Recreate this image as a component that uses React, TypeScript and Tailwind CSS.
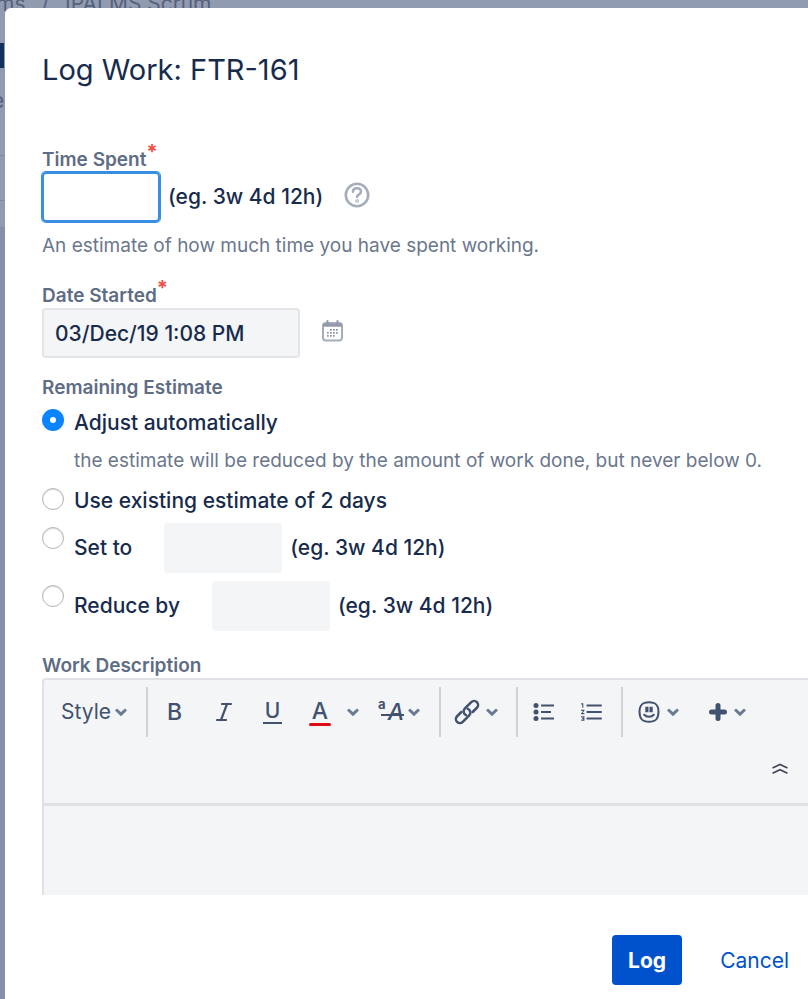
import type { ReactNode } from 'react'
import { Italic } from 'lucide-react'
import { MdFormatListNumbered } from 'react-icons/md'

const HINT = '(eg. 3w 4d 12h)'

function Chevron() {
  return (
    <svg width="12" height="12" viewBox="0 0 12 12" fill="none" stroke="#6b7a93" strokeWidth="3" aria-hidden="true">
      <path d="M1 3.5 6 8.2l5-4.7" />
    </svg>
  )
}

function HelpIcon() {
  return (
    <svg width="26" height="26" viewBox="0 0 26 26" fill="none" stroke="#a5adba" strokeWidth="2.6" strokeLinecap="round" aria-hidden="true">
      <circle cx="13" cy="13" r="11.2" />
      <path d="M9 9.800C9 7.500 10.700 6.200 13 6.200s4 1.400 4 3.500c0 2.700-3.900 2.700-3.900 5.300" />
      <circle cx="13.100" cy="19" r="0.500" />
    </svg>
  )
}

function CalendarIcon() {
  const dots = [
    [9, 9], [12, 9], [15, 9],
    [6, 12], [9, 12], [12, 12], [15, 12],
    [6, 15], [9, 15], [12, 15],
  ]
  return (
    <svg width="21" height="22" viewBox="0 0 21 22" fill="none" aria-hidden="true">
      <rect x="1" y="3" width="19" height="17.500" rx="3" stroke="#a5adba" strokeWidth="2" />
      <path d="M1 5.200h19" stroke="#9099aa" strokeWidth="3" />
      <path d="M5.500 1v3M15.500 1v3" stroke="#9099aa" strokeWidth="2" strokeLinecap="round" />
      {dots.map(([x, y]) => (
        <rect key={`${x}-${y}`} x={x - 1} y={y} width="1.700" height="1.700" fill="#8993a4" />
      ))}
    </svg>
  )
}

function LinkIcon() {
  return (
    <svg width="26" height="26" viewBox="-13 -13 26 26" fill="none" stroke="#42526e" strokeWidth="2.500" strokeLinecap="round" aria-hidden="true">
      <g transform="rotate(-45)">
        <path d="M4 4H10a4 4 0 0 0 0-8H.8a4 4 0 0 0-3.600 5.600" />
        <path d="M-4-4H-10a4 4 0 0 0 0 8H-.8a4 4 0 0 0 3.600-5.600" />
      </g>
    </svg>
  )
}

function BulletsIcon() {
  return (
    <svg width="22" height="20" viewBox="0 0 22 20" aria-hidden="true">
      <g fill="#42526e">
        <circle cx="3" cy="3.500" r="2.500" />
        <circle cx="3" cy="10" r="2.500" />
        <circle cx="3" cy="16.500" r="2.500" />
      </g>
      <path d="M8 3.500h13M8 10h10M8 16.500h13" stroke="#42526e" strokeWidth="2" />
    </svg>
  )
}

function EmojiIcon() {
  return (
    <svg width="22" height="22" viewBox="0 0 22 22" fill="none" stroke="#42526e" strokeWidth="2" aria-hidden="true">
      <path d="M11 1.200c6.900 0 9.500 2.800 9.500 9.600s-2.600 10-9.500 10-9.500-3.200-9.500-10S4.100 1.200 11 1.200Z" />
      <path d="M8.900 5.800v5.400M13.100 5.800v5.400" strokeWidth="3.200" />
      <path d="M6.200 13.800c2.400 2.600 7.200 2.600 9.600 0" strokeLinecap="round" />
    </svg>
  )
}

function PlusIcon() {
  return (
    <svg width="18" height="18" viewBox="0 0 18 18" stroke="#42526e" strokeWidth="5" strokeLinecap="round" aria-hidden="true">
      <path d="M9 2.500v13M2.500 9h13" />
    </svg>
  )
}

function CollapseIcon() {
  return (
    <svg width="16" height="12" viewBox="0 0 16 12" fill="none" stroke="#42475a" strokeWidth="1.600" aria-hidden="true">
      <path d="M.5 5 8 1.500 15.500 5M.5 10.200 8 6.700l7.500 3.500" />
    </svg>
  )
}

function Required() {
  return <span className="absolute -top-1.5 left-full text-[20px] font-bold text-[#f0504a]">*</span>
}

function FieldLabel({ htmlFor, required, children }: { htmlFor: string; required?: boolean; children: ReactNode }) {
  return (
    <label htmlFor={htmlFor} className="relative block w-fit pt-0.5 text-[19px] leading-6 font-semibold text-[#5e6c84]">
      {children}
      {required && <Required />}
    </label>
  )
}

function Radio({ id, checked }: { id: string; checked?: boolean }) {
  return (
    <input
      type="radio"
      id={id}
      name="estimate"
      defaultChecked={checked}
      className="mt-1 size-[22px] shrink-0 appearance-none rounded-full border border-[#b4b4b4] bg-white shadow-[inset_0_1px_1px_#d8d8d8] checked:border-8 checked:border-[#0a84ff] checked:shadow-none"
    />
  )
}

function ToolButton({ label, className, children }: { label: string; className: string; children: ReactNode }) {
  return (
    <button type="button" aria-label={label} className={`flex h-full items-center justify-center ${className}`}>
      {children}
    </button>
  )
}

function Toolbar() {
  return (
    <div className="flex h-[123px] flex-col justify-between text-[#42526e]">
      <div className="mt-[7px] flex h-[50px] divide-x-2 divide-[#cfd2d8]">
        <div className="relative flex w-[104px] items-center">
          <select aria-label="Style" className="h-full w-full appearance-none bg-transparent pl-[17px] text-[21px]">
            <option>Style</option>
          </select>
          <span className="pointer-events-none absolute right-[19px]">
            <Chevron />
          </span>
        </div>
        <div className="flex w-[293px] items-center pl-0.5">
          <ToolButton label="Bold" className="w-[49px] text-[23px] font-medium">B</ToolButton>
          <ToolButton label="Italic" className="w-[49px]">
            <Italic size={24} strokeWidth={2.2} />
          </ToolButton>
          <ToolButton label="Underline" className="w-[49px]">
            <span className="border-b-2 border-[#42526e] px-0.5 text-[21px] leading-[22px] font-medium">U</span>
          </ToolButton>
          <ToolButton label="Text color" className="w-[74px] gap-4">
            <span className="flex flex-col items-center text-[23px] leading-6 font-medium">
              A
              <span className="h-[3px] w-[22px] rounded-full bg-[#de0a16]" />
            </span>
            <Chevron />
          </ToolButton>
          <ToolButton label="More formatting" className="w-[56px] gap-1">
            <span className="relative flex w-[26px] items-center justify-end text-[23px] leading-6 font-medium italic">
              <span className="absolute -top-1 left-0 text-[13px] leading-4 font-bold not-italic">a</span>
              A
              <span className="absolute top-3.5 right-0 h-0.5 w-[23px] bg-[#42526e]" />
            </span>
            <Chevron />
          </ToolButton>
        </div>
        <div className="flex w-[77px] pr-1.5">
          <ToolButton label="Link" className="w-full gap-1.5">
            <LinkIcon />
            <Chevron />
          </ToolButton>
        </div>
        <div className="flex w-[105px] pl-0.5">
          <ToolButton label="Bullet list" className="w-[48px]">
            <BulletsIcon />
          </ToolButton>
          <ToolButton label="Numbered list" className="w-[48px]">
            <MdFormatListNumbered size={26} />
          </ToolButton>
        </div>
        <div className="flex">
          <ToolButton label="Emoji" className="w-[70px] gap-[7px]">
            <EmojiIcon />
            <Chevron />
          </ToolButton>
          <ToolButton label="Insert" className="w-[68px] gap-[7px]">
            <PlusIcon />
            <Chevron />
          </ToolButton>
        </div>
      </div>
      <button type="button" aria-label="Collapse toolbar" className="mr-5 mb-7 self-end">
        <CollapseIcon />
      </button>
    </div>
  )
}

function BoardBehind() {
  return (
    <div aria-hidden="true" className="absolute inset-0 overflow-hidden bg-[#8590a8] text-[21px] text-[#55617b]">
      <div className="h-[235px] bg-[#919bb0]">
        <div className="-mt-2 -ml-1 flex gap-4 leading-6">
          <span>ms</span>
          <span>/</span>
          <span>IPALMS Scrum</span>
        </div>
        <div className="mt-[27px] h-[25px] w-1 bg-[#12305c]" />
        <div className="-ml-2 mt-[21px] leading-6">e</div>
        <div className="mt-[42px] h-[46px] border-y border-[#7f8aa1]" />
      </div>
    </div>
  )
}

export default function App() {
  return (
    <div className="relative min-h-screen pt-2 pl-[5px] font-['Inter',sans-serif]">
      <BoardBehind />
      <div role="dialog" aria-labelledby="title" className="relative min-h-[calc(100vh-8px)] rounded-tl-md bg-white pt-[42px] pl-[37px] text-[#172b4d]">
        <h1 id="title" className="text-[29px] leading-10">Log Work: FTR-161</h1>

        <form className="mt-14 text-[21px] leading-7">
          <FieldLabel htmlFor="time-spent" required>Time Spent</FieldLabel>
          <div className="flex items-center font-medium">
            <input
              id="time-spent"
              className="h-[50px] w-[118px] rounded border-2 border-[#388ee0] px-2 ring-1 ring-[#388ee0] outline-none"
            />
            <span className="ml-2">{HINT}</span>
            <button type="button" aria-label="Help" className="mb-1 ml-[21px]">
              <HelpIcon />
            </button>
          </div>
          <p className="mt-3 text-[19px] leading-6 text-[#6b778c]">
            An estimate of how much time you have spent working.
          </p>

          <div className="mt-6">
            <FieldLabel htmlFor="date-started" required>Date Started</FieldLabel>
            <div className="flex items-center">
              <input
                id="date-started"
                defaultValue="03/Dec/19 1:08 PM"
                className="h-[50px] w-[258px] rounded border-2 border-[#e2e4e8] bg-[#f4f5f7] px-[11px] font-medium"
              />
              <button type="button" aria-label="Pick a date" className="mb-1 ml-[22px]">
                <CalendarIcon />
              </button>
            </div>
          </div>

          <fieldset className="mt-[17px]">
            <legend className="text-[19px] leading-[26px] font-semibold text-[#5e6c84]">Remaining Estimate</legend>
            <div className="mt-1 flex items-start gap-2.5">
              <Radio id="auto" checked />
              <div className="mt-1">
                <label htmlFor="auto" className="font-medium">Adjust automatically</label>
                <p className="mt-3 text-[19px] leading-6 text-[#6b778c]">
                  the estimate will be reduced by the amount of work done, but never below 0.
                </p>
              </div>
            </div>
            <div className="mt-[11px] flex items-start gap-2.5 font-medium">
              <Radio id="existing" />
              <label htmlFor="existing" className="mt-[3px]">Use existing estimate of 2 days</label>
            </div>
            <div className="mt-2 flex items-start gap-2.5 font-medium">
              <Radio id="set-to" />
              <div className="flex items-center">
                <label htmlFor="set-to">Set to</label>
                <input aria-label="Set to amount" className="mx-2 ml-8 h-[50px] w-[118px] rounded bg-[#f4f5f7] px-2" />
                <span>{HINT}</span>
              </div>
            </div>
            <div className="mt-2 flex items-start gap-2.5 font-medium">
              <Radio id="reduce-by" />
              <div className="flex items-center">
                <label htmlFor="reduce-by">Reduce by</label>
                <input aria-label="Reduce by amount" className="mx-2 ml-8 h-[50px] w-[118px] rounded bg-[#f4f5f7] px-2" />
                <span>{HINT}</span>
              </div>
            </div>
          </fieldset>

          <div className="mt-[21px]">
            <FieldLabel htmlFor="description">Work Description</FieldLabel>
            <div className="rounded-tl border-t-2 border-l-2 border-[#dfe1e6] bg-[#f4f5f7]">
              <Toolbar />
              <textarea
                id="description"
                className="block h-[92px] w-full resize-none border-t-[3px] border-[#dfe1e6] p-3 outline-none"
              />
            </div>
          </div>

          <div className="mt-10 flex items-center justify-end gap-[38px] pr-[19px] pb-3.5">
            <button type="submit" className="h-[50px] rounded bg-[#0052cc] px-4 pt-0.5 font-bold text-white">Log</button>
            <a href="#" className="pt-0.5 text-[#0052cc]">Cancel</a>
          </div>
        </form>
      </div>
    </div>
  )
}
